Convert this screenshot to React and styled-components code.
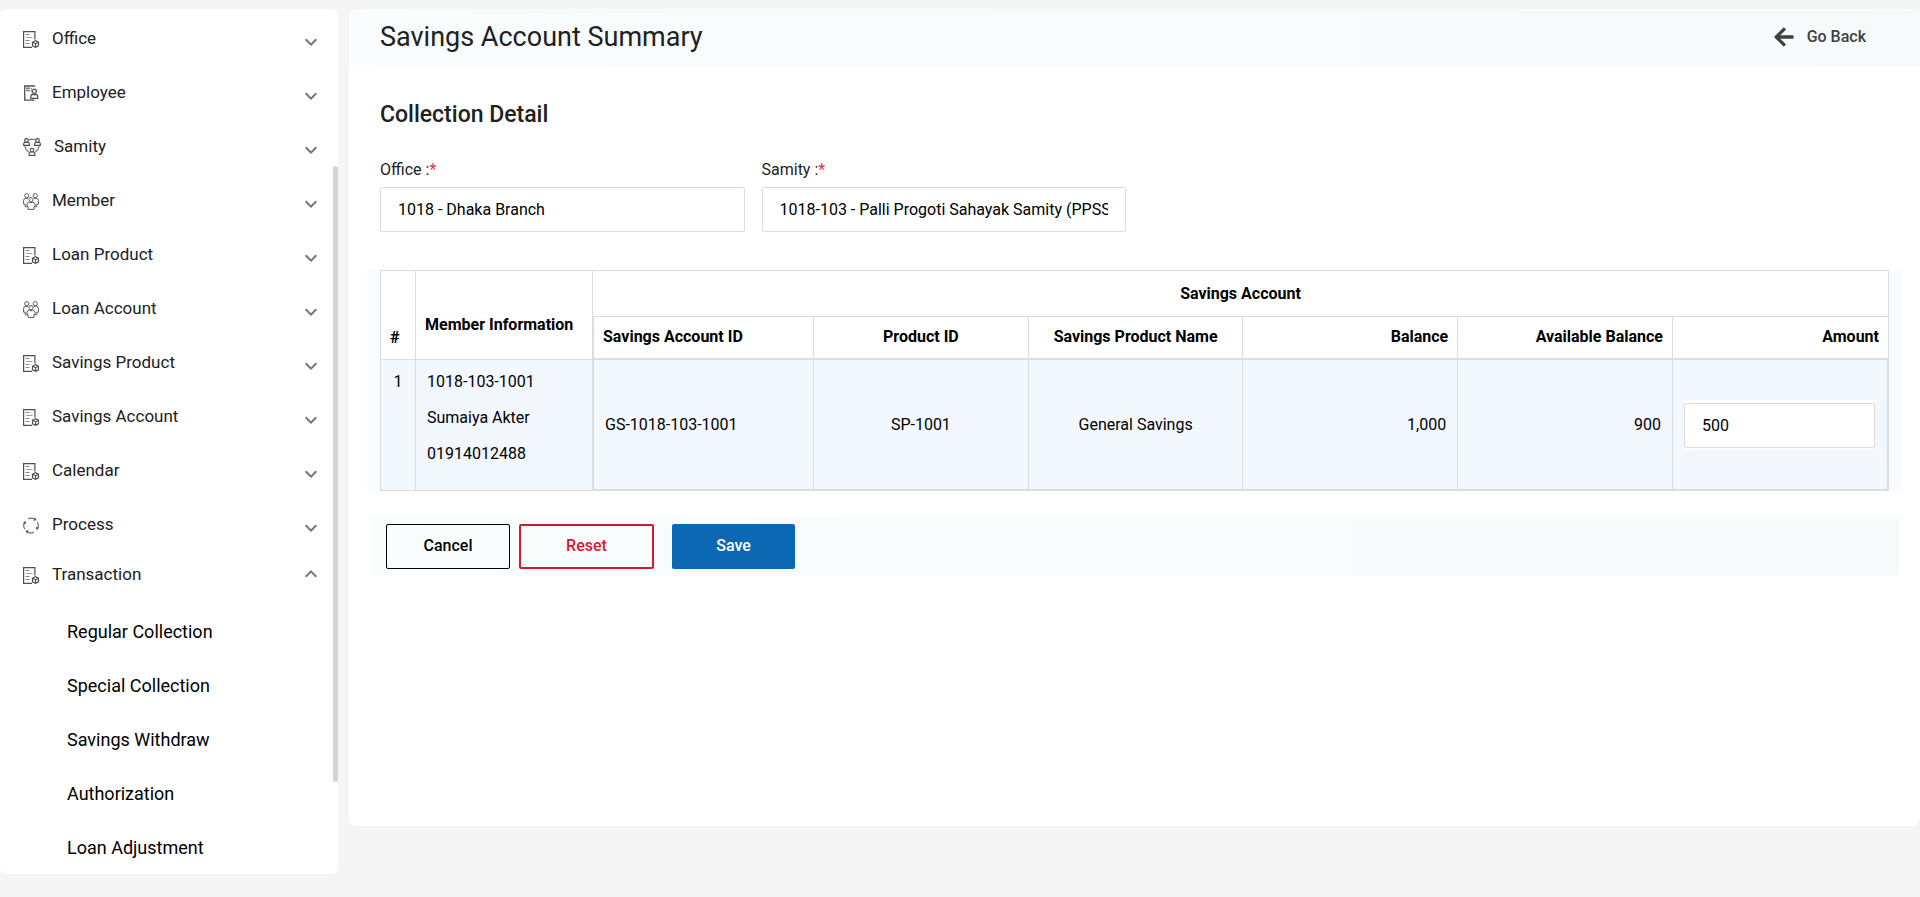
import React, { useState } from "react";
import styled, { createGlobalStyle, css } from "styled-components";
import { MdExpandMore, MdExpandLess } from "react-icons/md";
import { FaArrowLeft } from "react-icons/fa";

const menu = [
  { name: "Office", icon: "document" },
  { name: "Employee", icon: "employee" },
  { name: "Samity", icon: "samity" },
  { name: "Member", icon: "member" },
  { name: "Loan Product", icon: "document" },
  { name: "Loan Account", icon: "member" },
  { name: "Savings Product", icon: "document" },
  { name: "Savings Account", icon: "document" },
  { name: "Calendar", icon: "document" },
  { name: "Process", icon: "process" },
  {
    name: "Transaction",
    icon: "document",
    items: ["Regular Collection", "Special Collection", "Savings Withdraw", "Authorization", "Loan Adjustment"],
  },
];

const accounts = [
  {
    memberId: "1018-103-1001",
    memberName: "Sumaiya Akter",
    phone: "01914012488",
    accountId: "GS-1018-103-1001",
    productId: "SP-1001",
    productName: "General Savings",
    balance: "1,000",
    available: "900",
    amount: "500",
  },
];

const icons = {
  document: (
    <svg width="16" height="17" viewBox="0 0 16 17" fill="none" stroke="#4d5252">
      <path d="M9 16.4H.6V.6h11.3v8" strokeWidth="1.2" />
      <path d="M2.5 3.5h4M2.5 9.5h4M2.5 12.5h4" stroke="#858a8a" />
      <path d="M3 6.5h6.5" stroke="#9da1a1" />
      <path d="M9.5 11.2 12.6 9.7l2.9 1.5v3.6l-2.9 1.5-3.1-1.5zM9.5 11.2l3.1 1.5 2.9-1.5M12.6 12.7v3.6" strokeWidth="1.2" />
    </svg>
  ),
  employee: (
    <svg width="16" height="16" viewBox="0 0 16 16" fill="none" stroke="#4d5252">
      <path d="M11.5 1.4V1H1.7v14.2h9.8" strokeWidth="1.3" />
      <path d="M3.2 3.3h3.6M3.2 5.5h3.6" strokeWidth="1.6" stroke="#6f7474" />
      <path d="M7.8 3.5h1.4M7.8 5.5h1.2" stroke="#6f7474" />
      <circle cx="11.3" cy="6.3" r="2.1" strokeWidth="1.2" />
      <path d="M7.8 13.4v-1.6c0-1.6 1-2.5 2.4-2.5l1.1.7 1.1-.7c1.4 0 2.4.9 2.4 2.5v1.6z" strokeWidth="1.2" />
    </svg>
  ),
  samity: (
    <svg width="18" height="18" viewBox="0 0 18 18" fill="none" stroke="#4d5252" strokeWidth="1.2">
      <path d="M5.8 1.7Q9 .5 12.2 1.7M2 7.8q.4 4.5 3.8 6.2M16 7.8q-.4 4.5-3.8 6.2" stroke="#6f7474" />
      <circle cx="3.5" cy="2.5" r="1.8" />
      <path d="M.7 7.4V5.8q0-1.3 1.4-1.5h2.8q1.4.2 1.4 1.5v1.6z" />
      <circle cx="14.5" cy="2.5" r="1.8" />
      <path d="M11.7 7.4V5.8q0-1.3 1.4-1.5h2.8q1.4.2 1.4 1.5v1.6z" />
      <circle cx="9" cy="12.2" r="1.8" />
      <path d="M6.2 17.3v-1.8q0-1.3 1.4-1.5h2.8q1.4.2 1.4 1.5v1.8z" />
    </svg>
  ),
  member: (
    <svg width="16" height="17" viewBox="0 0 16 17" fill="none" stroke="#565b5b">
      <circle cx="3.8" cy="2.7" r="2.1" />
      <circle cx="12.2" cy="2.7" r="2.1" />
      <circle cx="8" cy="6.7" r="2.1" />
      <path d="M3.8 13.8H2.2v-2.6H.6V7.6q0-2.1 2-2.4l2.4.4M12.2 13.8h1.6v-2.6h1.6V7.6q0-2.1-2-2.4l-2.4.4" />
      <path d="M4 13.5v-2.4q.2-1.7 2.3-1.9l1.7.7 1.7-.7q2.1.2 2.3 1.9v2.4h-1v2.9H5v-2.9z" />
    </svg>
  ),
  process: (
    <svg width="16" height="17" viewBox="0 0 16 17" fill="none" stroke="#6a6f6f">
      <path
        d="M5.2 1.6A7.4 7.4 0 0 1 10.8 1.6M14.2 4.7A7.4 7.4 0 0 1 15 10.5M10.8 15.4A7.4 7.4 0 0 1 5.2 15.4M1.8 12.3A7.4 7.4 0 0 1 1 6.5"
        strokeWidth="1.2"
      />
      <g fill="#4d5252" stroke="none">
        <path d="m10.2 3.7 3.4-.5L11.9.2z" />
        <path d="m12.6 10 1.4 3.2 2-2.6z" />
        <path d="m5.8 13.3-3.4.5 1.7 3z" />
        <path d="M3.4 7 2 3.8 0 6.4z" />
      </g>
    </svg>
  ),
};

function Sidebar() {
  const [open, setOpen] = useState("Transaction");
  return (
    <Aside>
      <nav>
        {menu.map((item) => {
          const isOpen = open === item.name;
          return (
            <div key={item.name}>
              <MenuButton $open={isOpen} aria-expanded={isOpen} onClick={() => setOpen(isOpen ? "" : item.name)}>
                <MenuIcon>{icons[item.icon]}</MenuIcon>
                <span className="name">{item.name}</span>
                <Chevron $open={isOpen}>{isOpen ? <MdExpandLess size={24} /> : <MdExpandMore size={24} />}</Chevron>
              </MenuButton>
              {isOpen && item.items && (
                <SubMenu>
                  {item.items.map((sub) => (
                    <li key={sub}>
                      <a href="#">{sub}</a>
                    </li>
                  ))}
                </SubMenu>
              )}
            </div>
          );
        })}
      </nav>
      <ScrollThumb />
    </Aside>
  );
}

function AccountTable() {
  return (
    <TableWrap>
      <Table>
        <colgroup>
          <col className="serial" />
          <col className="member" />
          <col className="account" />
          <col span="4" />
          <col className="amount" />
        </colgroup>
        <thead>
          <tr>
            <HeadCell rowSpan="2" $low>
              #
            </HeadCell>
            <HeadCell rowSpan="2">Member Information</HeadCell>
            <HeadCell colSpan="6" $align="center" $last>
              Savings Account
            </HeadCell>
          </tr>
          <tr>
            <SubHeadCell $first>Savings Account ID</SubHeadCell>
            <SubHeadCell $align="center">Product ID</SubHeadCell>
            <SubHeadCell $align="center">Savings Product Name</SubHeadCell>
            <SubHeadCell $align="right">Balance</SubHeadCell>
            <SubHeadCell $align="right">Available Balance</SubHeadCell>
            <SubHeadCell $align="right" $last>
              Amount
            </SubHeadCell>
          </tr>
        </thead>
        <tbody>
          {accounts.map((row, i) => (
            <tr key={row.accountId}>
              <MemberCell $align="center">{i + 1}</MemberCell>
              <MemberCell>
                <div>{row.memberId}</div>
                <div>{row.memberName}</div>
                <div>{row.phone}</div>
              </MemberCell>
              <Cell $first>{row.accountId}</Cell>
              <Cell $align="center">{row.productId}</Cell>
              <Cell $align="center">{row.productName}</Cell>
              <Cell $align="right">{row.balance}</Cell>
              <Cell $align="right">{row.available}</Cell>
              <Cell $last>
                <AmountBox>
                  <Input type="text" aria-label="Amount" defaultValue={row.amount} />
                </AmountBox>
              </Cell>
            </tr>
          ))}
        </tbody>
      </Table>
    </TableWrap>
  );
}

function App() {
  return (
    <>
      <GlobalStyle />
      <Page>
        <Sidebar />
        <Card>
          <Header>
            <h1>Savings Account Summary</h1>
            <BackButton type="button">
              <FaArrowLeft size={22} />
              Go Back
            </BackButton>
          </Header>
          <Section>
            <h2>Collection Detail</h2>
            <Fields>
              <Field>
                <label htmlFor="office">
                  Office :<span>*</span>
                </label>
                <Input id="office" type="text" defaultValue="1018 - Dhaka Branch" />
              </Field>
              <Field>
                <label htmlFor="samity">
                  Samity :<span>*</span>
                </label>
                <Input id="samity" type="text" defaultValue="1018-103 - Palli Progoti Sahayak Samity (PPSS)" />
              </Field>
            </Fields>
          </Section>
          <AccountTable />
          <Actions>
            <Button type="button">Cancel</Button>
            <Button type="button" $kind="reset">
              Reset
            </Button>
            <Button type="button" $kind="save">
              Save
            </Button>
          </Actions>
        </Card>
      </Page>
    </>
  );
}

export default App;

const GlobalStyle = createGlobalStyle`
  * {
    box-sizing: border-box;
  }

  body {
    margin: 0;
    background: #f5f5f5;
    color: #212121;
    font-family: Roboto, "Liberation Sans", sans-serif;
    font-size: 16px;
  }

  button,
  input {
    font-family: inherit;
    font-size: inherit;
  }
`;

const Page = styled.div`
  display: flex;
  align-items: flex-start;
  gap: 11px;
  min-height: 100vh;
  padding-top: 9px;
`;

const Aside = styled.aside`
  position: relative;
  flex: 0 0 338px;
  height: calc(100vh - 32px);
  padding-top: 2px;
  background: #fff;
  border-radius: 6px;
  overflow: hidden;
`;

const MenuButton = styled.button`
  display: flex;
  align-items: center;
  width: 100%;
  height: ${({ $open }) => ($open ? "46px" : "54px")};
  padding: 0 15px 0 23px;
  border: 0;
  background: none;
  color: #212121;
  font-size: 17px;
  text-align: left;
  cursor: pointer;

  .name {
    flex: 1;
    padding-left: 13px;
  }
`;

const MenuIcon = styled.span`
  display: flex;
  padding-top: 2px;
`;

const Chevron = styled.span`
  display: flex;
  padding-top: ${({ $open }) => ($open ? "0" : "8px")};
  color: #757575;
`;

const SubMenu = styled.ul`
  margin: 0;
  padding: 8px 0 0;
  list-style: none;

  a {
    display: block;
    padding-left: 67px;
    color: #000;
    font-size: 18px;
    line-height: 54px;
    text-decoration: none;
  }
`;

const ScrollThumb = styled.div`
  position: absolute;
  top: 157px;
  right: 0;
  bottom: 92px;
  width: 5px;
  border-radius: 3px;
  background: #d4d4d4;
`;

const Card = styled.main`
  flex: 1;
  min-width: 0;
  min-height: calc(100vh - 80px);
  background: #fff;
  border-radius: 8px;
  overflow: hidden;
`;

const Header = styled.header`
  display: flex;
  align-items: center;
  justify-content: space-between;
  height: 57px;
  padding: 0 54px 2px 31px;
  background: linear-gradient(90deg, #f9fdfe, #f6fafb);

  h1 {
    margin: 0;
    font-size: 27px;
    font-weight: 400;
  }
`;

const BackButton = styled.button`
  display: flex;
  align-items: center;
  gap: 12px;
  padding: 0;
  border: 0;
  background: none;
  color: #404040;
  font-weight: 500;
  cursor: pointer;
`;

const Section = styled.section`
  padding: 34px 31px 0;

  h2 {
    margin: 0;
    font-size: 23px;
    font-weight: 500;
    line-height: 30px;
  }
`;

const Fields = styled.div`
  display: grid;
  grid-template-columns: repeat(4, 1fr);
  gap: 17px;
  margin-top: 28px;
`;

const Field = styled.div`
  min-width: 0;

  label {
    display: block;
    margin-bottom: 5px;
    line-height: 24px;
  }

  span {
    color: #dc3545;
  }
`;

const Input = styled.input`
  display: block;
  width: 100%;
  height: 45px;
  padding: 0 17px;
  border: 1px solid #dcdcdc;
  border-radius: 2px;
  background: #fff;
  color: #000;
  outline: none;
`;

const TableWrap = styled.div`
  margin: 38px 18px 0;
  padding: 0 13px;
  background: #fafbff;
`;

const Table = styled.table`
  width: 100%;
  table-layout: fixed;
  border-spacing: 0;
  color: #000;

  .serial {
    width: 35px;
  }

  .member {
    width: 177px;
  }

  .account {
    width: 221px;
  }

  .amount {
    width: 217px;
  }
`;

const line = "solid #dadde0";

const HeadCell = styled.th`
  height: 46px;
  padding: 0 9px ${({ $low, $align }) => ($low ? "12px" : $align ? "0" : "25px")};
  border: ${line};
  border-width: 1px ${({ $last }) => ($last ? "1px" : "0")} 0 1px;
  background: #fff;
  font-weight: 700;
  text-align: ${({ $align }) => $align || "left"};
  vertical-align: ${({ $align }) => ($align ? "middle" : "bottom")};
`;

const SubHeadCell = styled.th`
  height: 43px;
  padding: 0 9px 2px;
  border: ${line};
  border-width: 1px ${({ $last }) => ($last ? "1px" : "0")} 1px ${({ $first }) => ($first ? "2px" : "1px")};
  background: #fff;
  font-weight: 700;
  text-align: ${({ $align }) => $align || "left"};
`;

const bodyCell = css`
  background: #f3f8ff;
  text-align: ${({ $align }) => $align || "left"};
`;

const MemberCell = styled.td`
  ${bodyCell}
  height: 132px;
  padding: 4px ${({ $align }) => ($align ? "0" : "11px")};
  border: ${line};
  border-width: 1px 0 1px 1px;
  line-height: 36px;
  vertical-align: top;
`;

const Cell = styled.td`
  ${bodyCell}
  padding: 0 ${({ $last }) => ($last ? "12px" : "11px")} 0 11px;
  border: ${line};
  border-width: 1px ${({ $last }) => ($last ? "2px" : "0")} 2px ${({ $first }) => ($first ? "2px" : "1px")};
`;

const AmountBox = styled.div`
  padding: 3px 0 2px;
  background: #fff;
`;

const Actions = styled.div`
  display: flex;
  margin: 26px 21px 0;
  padding: 7px 16px;
  border-radius: 3px;
  background: linear-gradient(90deg, #f9fdfe, #f6fafb);
`;

const Button = styled.button`
  width: 124px;
  height: 45px;
  padding: 0 6px 2px;
  border: 1px solid #000;
  border-radius: 2px;
  background: none;
  color: #000;
  font-weight: 500;
  cursor: pointer;

  ${({ $kind }) =>
    $kind === "reset" &&
    css`
      width: 135px;
      margin: 0 18px 0 9px;
      border: 2px solid #d9182d;
      color: #d9182d;
    `}

  ${({ $kind }) =>
    $kind === "save" &&
    css`
      width: 123px;
      border: 0;
      background: #0c68b3;
      color: #fff;
    `}
`;
